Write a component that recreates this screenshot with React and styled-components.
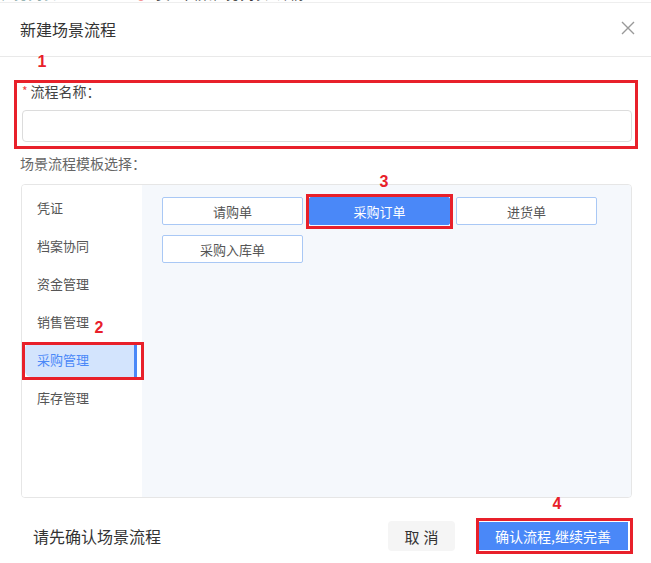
import React from "react";
import styled, { createGlobalStyle } from "styled-components";

const Global = createGlobalStyle`
  html, body { margin: 0; padding: 0; background: #fff; }
  body { font-family: "Noto Sans CJK SC", "Noto Sans", sans-serif; overflow: hidden; }
  * { box-sizing: border-box; }
`;

const Page = styled.div`
  position: relative;
  width: 651px;
  height: 563px;
  background: #fff;
  overflow: hidden;
`;

const TopStrip = styled.div`
  height: 3px;
  overflow: hidden;
  border-bottom: 1px solid #eeeeee;
`;

const StripRow = styled.div`
  display: flex;
  gap: 8px;
  margin-top: -15px;
  height: 16px;
  line-height: 16px;
  font-size: 14px;
  white-space: nowrap;
`;

const StripText = styled.span`
  color: ${p => p.$c || "#999"};
  margin-left: ${p => p.$gap || 0}px;
`;

const Header = styled.div`
  height: 54px;
  display: flex;
  align-items: center;
  justify-content: space-between;
  padding: 0 15px 0 20px;
  border-bottom: 1px solid #e9e9e9;
`;

const Title = styled.div`
  font-size: 16px;
  color: #333;
  margin-top: -2px;
`;

const Close = styled.svg`
  width: 16px;
  height: 16px;
  margin-top: -3px;
`;

const Body = styled.div`
  padding: 24px 19px 0 22px;
`;

const Label = styled.div`
  font-size: 14px;
  color: #444;
  height: 20px;
  line-height: 20px;
  display: flex;
  align-items: center;
`;

const Star = styled.span`
  color: #f04444;
  font-size: 12px;
  margin-right: 3px;
`;

const Input = styled.div`
  margin-top: 9px;
  height: 32px;
  width: 610px;
  border: 1px solid #dcdcdc;
  border-radius: 4px;
  background: #fff;
`;

const SubLabel = styled.div`
  margin-top: 11px;
  margin-left: -2px;
  font-size: 14px;
  color: #666;
  height: 20px;
  line-height: 20px;
`;

const Panel = styled.div`
  margin-top: 11px;
  margin-left: -1px;
  width: 611px;
  height: 314px;
  border: 1px solid #e6e6e6;
  border-radius: 4px;
  display: flex;
  overflow: hidden;
`;

const Sidebar = styled.div`
  width: 120px;
  padding: 6px 5px 0 3px;
  display: flex;
  flex-direction: column;
  gap: 4px;
  background: #fff;
`;

const NavItem = styled.div`
  position: relative;
  height: 34px;
  line-height: 34px;
  padding-left: 12px;
  font-size: 13px;
  color: ${p => (p.$active ? "#4a88f8" : "#555")};
  background: ${p => (p.$active ? "#d3e4fd" : "transparent")};
  border-radius: 6px 0 0 6px;
  &::after {
    content: "";
    display: ${p => (p.$active ? "block" : "none")};
    position: absolute;
    right: 0;
    top: 0;
    bottom: 0;
    width: 3px;
    background: #4a88f8;
  }
`;

const Content = styled.div`
  flex: 1;
  background: #f5f8fc;
  padding: 12px 0 0 20px;
  display: grid;
  grid-template-columns: repeat(3, 141px);
  grid-auto-rows: 28px;
  column-gap: 6px;
  row-gap: 10px;
  align-content: start;
`;

const Tpl = styled.div`
  border: 1px solid ${p => (p.$active ? "#4a88f8" : "#a9c8f5")};
  background: ${p => (p.$active ? "#4a88f8" : "#fff")};
  color: ${p => (p.$active ? "#fff" : "#555")};
  border-radius: 2px;
  font-size: 13px;
  display: flex;
  align-items: center;
  justify-content: center;
`;

const Footer = styled.div`
  display: flex;
  align-items: center;
  padding: 23px 23px 0 33px;
`;

const Hint = styled.div`
  flex: 1;
  font-size: 16px;
  color: #333;
`;

const Btn = styled.div`
  height: ${p => (p.$primary ? "28px" : "30px")};
  width: ${p => (p.$primary ? "150px" : "67px")};
  margin-left: ${p => (p.$primary ? "23px" : "0")};
  border-radius: ${p => (p.$primary ? "0" : "4px")};
  background: ${p => (p.$primary ? "#4a88f8" : "#f5f5f5")};
  color: ${p => (p.$primary ? "#fff" : "#333")};
  font-size: ${p => (p.$primary ? "14px" : "15px")};
  display: flex;
  align-items: center;
  justify-content: center;
  letter-spacing: ${p => (p.$primary ? "0" : "4px")};
  text-indent: ${p => (p.$primary ? "0" : "4px")};
`;

const Mark = styled.div`
  position: absolute;
  border: 3px solid #e8202a;
  pointer-events: none;
`;

const Num = styled.div`
  position: absolute;
  color: #e8202a;
  font-family: "Liberation Sans", Arial, sans-serif;
  font-weight: bold;
  font-size: 16px;
  line-height: 16px;
  transform: translate(-50%, -50%);
`;

const navs = ["凭证", "档案协同", "资金管理", "销售管理", "采购管理", "库存管理"];
const tpls = ["请购单", "采购订单", "进货单", "采购入库单"];

export default function App() {
  return (
    <Page>
      <Global />
      <TopStrip>
        <StripRow>
          <StripText $c="#8aa">任务列表</StripText>
          <StripText $c="#f04444" $gap={70}>●</StripText>
          <StripText $c="#333">资金归集任务列表</StripText>
          <StripText $c="#555">详情</StripText>
        </StripRow>
      </TopStrip>
      <Header>
        <Title>新建场景流程</Title>
        <Close viewBox="0 0 16 16">
          <path d="M2 2 L14 14 M14 2 L2 14" stroke="#999" strokeWidth="1.4" fill="none" />
        </Close>
      </Header>
      <Body>
        <Label>
          <Star>*</Star>流程名称：
        </Label>
        <Input />
        <SubLabel>场景流程模板选择：</SubLabel>
        <Panel>
          <Sidebar>
            {navs.map(n => (
              <NavItem key={n} $active={n === "采购管理"}>{n}</NavItem>
            ))}
          </Sidebar>
          <Content>
            {tpls.map(t => (
              <Tpl key={t} $active={t === "采购订单"}>{t}</Tpl>
            ))}
          </Content>
        </Panel>
      </Body>
      <Footer>
        <Hint>请先确认场景流程</Hint>
        <Btn>取消</Btn>
        <Btn $primary>确认流程,继续完善</Btn>
      </Footer>

      <Mark style={{ left: 14, top: 80, width: 624, height: 69 }} />
      <Mark style={{ left: 22, top: 342, width: 122, height: 38 }} />
      <Mark style={{ left: 306, top: 194, width: 147, height: 35 }} />
      <Mark style={{ left: 476, top: 518, width: 157, height: 36 }} />
      <Num style={{ left: 42, top: 62 }}>1</Num>
      <Num style={{ left: 99, top: 328 }}>2</Num>
      <Num style={{ left: 384, top: 182 }}>3</Num>
      <Num style={{ left: 557, top: 504 }}>4</Num>
    </Page>
  );
}
